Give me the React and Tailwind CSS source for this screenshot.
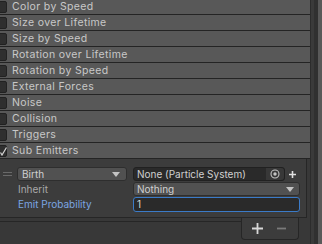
import React from "react";

const rows = [
  "Color by Speed",
  "Size over Lifetime",
  "Size by Speed",
  "Rotation over Lifetime",
  "Rotation by Speed",
  "External Forces",
  "Noise",
  "Collision",
  "Triggers",
];

function Check({ checked }) {
  return (
    <div className="relative w-[13px] h-[12px] -ml-[6px] shrink-0 rounded-[2px] bg-[#2f2f2f] border border-[#222222]">
      {checked && (
        <svg className="absolute left-[5px] top-[1px]" width="7" height="9" viewBox="0 0 7 9">
          <path d="M0.5 5.5 L2 8 L6.5 0.5" stroke="#d6d6d6" strokeWidth="1.2" fill="none" />
        </svg>
      )}
    </div>
  );
}

function Header({ label, checked }) {
  return (
    <div className="h-[16px] flex items-center gap-[5px] bg-[#585858] border-b border-[#242424] text-[#c8c8c8]">
      <Check checked={checked} />
      <span className="leading-none pt-px text-[10.5px] tracking-[0.35px]">{label}</span>
    </div>
  );
}

function Arrow() {
  return (
    <svg width="8" height="5" viewBox="0 0 8 5">
      <path d="M0 0 L8 0 L4 5 Z" fill="#c4c4c4" />
    </svg>
  );
}

export default function App() {
  return (
    <div
      className="w-[322px] h-[244px] overflow-hidden flex bg-[#383838] text-[10px]"
      style={{ fontFamily: "Inter, 'Noto Sans', sans-serif" }}
    >
      <div className="w-[311px] flex flex-col border-r border-[#2c2c2c]">
        <div className="-mt-px flex flex-col">
          {rows.map((r) => (
            <Header key={r} label={r} />
          ))}
          <Header label="Sub Emitters" checked />
        </div>
        <div className="mr-[3px] h-[59px] bg-[#3c3c3c] border-r border-b border-[#262626] pt-[8px] flex flex-col gap-[1px]">
          <div className="h-[14px] flex items-center">
            <div className="w-[17px] flex flex-col gap-[2px] pl-[3px]">
              <div className="w-[9px] h-px bg-[#6a6a6a]" />
              <div className="w-[9px] h-px bg-[#6a6a6a]" />
            </div>
            <div className="w-[110px] h-[14px] flex items-center justify-between pl-[4px] pr-[6px] bg-[#515151] border border-[#2e2e2e] rounded-[3px] text-[#d0d0d0]">
              <span>Birth</span>
              <Arrow />
            </div>
            <div className="ml-[6px] w-[152px] h-[14px] flex items-center bg-[#2a2a2a] border border-[#212121] rounded-[3px] text-[#d0d0d0]">
              <span className="flex-1 pl-[3px]">None (Particle System)</span>
              <div className="w-[18px] h-full flex items-center justify-center bg-[#383838] rounded-r-[3px]">
                <svg width="10" height="10" viewBox="0 0 10 10">
                  <circle cx="5" cy="5" r="4" stroke="#c4c4c4" strokeWidth="1.1" fill="none" />
                  <circle cx="5" cy="5" r="1.7" fill="#c4c4c4" />
                </svg>
              </div>
            </div>
            <div className="w-[15px] flex justify-center">
              <svg width="7" height="7" viewBox="0 0 7 7">
                <path d="M3.5 0 V7 M0 3.5 H7" stroke="#e0e0e0" strokeWidth="1.6" />
              </svg>
            </div>
          </div>
          <div className="h-[14px] flex items-center">
            <span className="w-[133px] pl-[18px] text-[#a9a9a9]">Inherit</span>
            <div className="w-[167px] h-[14px] flex items-center justify-between pl-[3px] pr-[5px] bg-[#515151] border border-[#2e2e2e] rounded-[3px] text-[#d0d0d0]">
              <span>Nothing</span>
              <Arrow />
            </div>
          </div>
          <div className="h-[15px] flex items-center">
            <span className="w-[133px] pl-[18px] text-[#7ba6e2]">Emit Probability</span>
            <div className="w-[167px] h-[15px] flex items-center pl-[3px] bg-[#2a2a2a] border border-[#3b7bc8] rounded-[3px] text-[#d8d8d8]">
              <span>1</span>
            </div>
          </div>
        </div>
        <div className="flex mr-[3px]">
          <div className="flex-1 h-[4px] border-b border-[#262626]" />
          <div className="w-[58px] h-[22px] mr-[8px] border-x border-b border-[#262626] rounded-b-[4px] bg-[#3c3c3c] flex items-center justify-between pl-[10px] pr-[12px]">
            <svg width="11" height="11" viewBox="0 0 11 11">
              <path d="M5.5 0 V11 M0 5.5 H11" stroke="#d8d8d8" strokeWidth="1.8" />
            </svg>
            <svg width="9" height="11" viewBox="0 0 9 11">
              <path d="M0 5.5 H9" stroke="#7a7a7a" strokeWidth="1.8" />
            </svg>
          </div>
        </div>
      </div>
      <div className="w-[3px] bg-[#3a3a3a]" />
      <div className="w-[4px] bg-[#303030]" />
      <div className="flex-1 bg-[#595959]" />
    </div>
  );
}
